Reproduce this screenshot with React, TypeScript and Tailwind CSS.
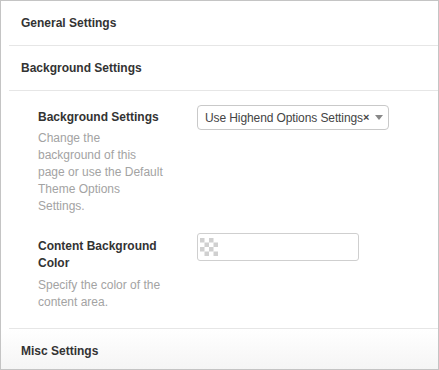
const font = { fontFamily: "'Liberation Sans', Arial, sans-serif" };

const Checker = () => (
  <svg width="18" height="18" viewBox="0 0 18 18" className="shrink-0">
    {[0, 1, 2, 3].map((r) =>
      [0, 1, 2, 3].map((c) =>
        (r + c) % 2 === 0 ? (
          <rect key={`${r}-${c}`} x={c * 4.5} y={r * 4.5} width="4.5" height="4.5" fill="#d0d0d0" />
        ) : null
      )
    )}
  </svg>
);

const App = () => {
  return (
    <div
      className="w-[439px] h-[370px] bg-white border border-[#c4c4c4] overflow-hidden flex flex-col text-[#333]"
      style={font}
    >
      <div className="h-[44px] flex items-center pl-[20px] text-[12px] font-bold">General Settings</div>
      <div className="ml-[8px] border-t border-[#e6e6e6]" />
      <div className="h-[44px] flex items-center pl-[20px] text-[12px] font-bold">Background Settings</div>
      <div className="ml-[8px] border-t border-[#e6e6e6]" />

      {/* Options */}
      <div className="flex-1 flex flex-col pl-[37px] pt-[14px]">
        <div className="flex">
          <div className="w-[126px] shrink-0">
            <div className="text-[12px] font-bold leading-[17px] pt-[4px]">Background Settings</div>
            <p className="text-[12px] text-[#a3a3a3] leading-[17px] mt-[4px]">
              Change the background of this page or use the Default Theme Options Settings.
            </p>
          </div>
          <div className="ml-[33px]">
            <div className="w-[192px] h-[25px] border border-[#c9c9c9] rounded-[4px] flex items-center pl-[7px] pr-[5px] text-[12px] text-[#444]">
              <span className="whitespace-nowrap tracking-[-0.1px]">Use Highend Options Settings</span>
              <span className="text-[11px] font-bold leading-none">×</span>
              <span className="ml-auto w-0 h-0 border-l-[4px] border-r-[4px] border-t-[5px] border-l-transparent border-r-transparent border-t-[#888]" />
            </div>
          </div>
        </div>

        <div className="flex mt-[18px]">
          <div className="w-[126px] shrink-0">
            <div className="text-[12px] font-bold leading-[17px] pt-[5px]">Content Background Color</div>
            <p className="text-[12px] text-[#a3a3a3] leading-[17px] mt-[5px]">
              Specify the color of the content area.
            </p>
          </div>
          <div className="ml-[33px]">
            <div className="w-[162px] h-[28px] border border-[#cfcfcf] rounded-[3px] flex items-center pl-[2px]">
              <Checker />
            </div>
          </div>
        </div>
      </div>

      <div className="ml-[8px] border-t border-[#e6e6e6]" />
      <div className="h-[40px] pt-[14px] pl-[20px] text-[12px] leading-[17px] font-bold bg-gradient-to-b from-white to-[#f5f5f5]">
        Misc Settings
      </div>
    </div>
  );
};

export default App;
